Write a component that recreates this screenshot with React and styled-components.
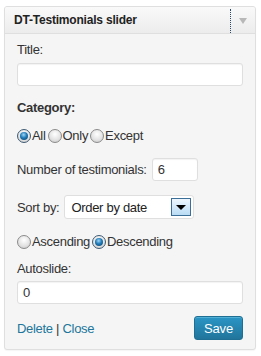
import React from "react";
import styled, { createGlobalStyle } from "styled-components";

const Global = createGlobalStyle`
  html, body { margin: 0; padding: 0; background: #fff; }
  body { font-family: "Liberation Sans", Arial, sans-serif; color: #333; }
`;

const Page = styled.div`
  padding: 6px 5px 7px 4px;
  width: 261px;
  box-sizing: border-box;
`;

const Panel = styled.div`
  border: 1px solid #dfdfdf;
  border-radius: 3px;
  background: #f5f5f5;
  box-shadow: 0 1px 1px rgba(0,0,0,0.04);
  overflow: hidden;
`;

const Header = styled.div`
  height: 26px;
  display: flex;
  align-items: center;
  background: linear-gradient(#f9f9f9, #ececec);
  border-bottom: 1px solid #dfdfdf;
`;

const HeaderTitle = styled.div`
  flex: 1;
  padding-left: 9px;
  font-size: 12px;
  font-weight: bold;
  letter-spacing: -0.2px;
  color: #222;
`;

const Toggle = styled.div`
  width: 24px;
  align-self: stretch;
  margin-top: 2px;
  border-left: 1px dotted #2b4a6b;
  display: flex;
  align-items: center;
  justify-content: center;
`;

const Arrow = styled.span`
  width: 0;
  height: 0;
  border-left: 4px solid transparent;
  border-right: 4px solid transparent;
  border-top: 6px solid #b8b8b8;
  margin-top: -1px;
`;

const Body = styled.div`
  padding: 8px 12px 9px 12px;
  font-size: 13px;
  letter-spacing: -0.3px;
`;

const Label = styled.div`
  line-height: 16px;
  font-weight: ${(p) => (p.$bold ? "bold" : "normal")};
  margin-top: ${(p) => p.$mt || 0}px;
`;

const TextInput = styled.div`
  box-sizing: border-box;
  height: 23px;
  margin-top: ${(p) => p.$mt || 0}px;
  width: ${(p) => p.$w || "100%"};
  background: #fff;
  border: 1px solid #dfdfdf;
  border-radius: 3px;
  box-shadow: inset 0 1px 1px rgba(0,0,0,0.05);
  padding: 0 5px;
  display: flex;
  align-items: center;
  font-size: 13px;
  color: #333;
`;

const Row = styled.div`
  display: flex;
  align-items: center;
  gap: ${(p) => p.$gap || 0}px;
  margin-top: ${(p) => p.$mt || 0}px;
`;

const RadioLabel = styled.label`
  display: inline-flex;
  align-items: center;
  line-height: 16px;
  margin-right: 2px;
`;

const RadioDot = styled.span`
  box-sizing: border-box;
  width: 14px;
  height: 14px;
  border-radius: 50%;
  margin-right: 1px;
  border: 1px solid ${(p) => (p.$on ? "#3d5a73" : "#8a8a8a")};
  background: radial-gradient(circle at 50% 35%, #ffffff 0%, #e4e4e4 55%, #c6c6c6 100%);
  position: relative;
  display: inline-block;
  &::after {
    content: "";
    display: ${(p) => (p.$on ? "block" : "none")};
    position: absolute;
    left: 2px;
    top: 2px;
    width: 8px;
    height: 8px;
    border-radius: 50%;
    background: radial-gradient(circle at 45% 35%, #9fd6f5 0%, #1f7ab8 45%, #0c3f66 100%);
  }
`;

const Select = styled.div`
  box-sizing: border-box;
  width: 130px;
  height: 24px;
  background: #fff;
  border: 1px solid #dfdfdf;
  border-radius: 3px;
  display: flex;
  align-items: center;
  padding: 0 2px 0 6px;
  font-size: 13px;
  color: #222;
`;

const SelectText = styled.span`
  flex: 1;
`;

const SelectButton = styled.span`
  box-sizing: border-box;
  width: 20px;
  height: 18px;
  border: 1px solid #3c6f98;
  background: linear-gradient(#eef6fd, #b9dcf5);
  display: flex;
  align-items: center;
  justify-content: center;
  &::after {
    content: "";
    border-left: 5px solid transparent;
    border-right: 5px solid transparent;
    border-top: 5px solid #000;
  }
`;

const Footer = styled.div`
  display: flex;
  align-items: center;
  justify-content: space-between;
  margin-top: 12px;
`;

const Links = styled.div`
  color: #333;
  font-size: 13px;
`;

const Link = styled.a`
  color: #21759b;
  text-decoration: none;
`;

const SaveButton = styled.button`
  box-sizing: border-box;
  width: 49px;
  height: 24px;
  border: 1px solid #1f6f94;
  border-radius: 3px;
  background: linear-gradient(#2a95c5, #21759b);
  color: #fff;
  font-family: "Liberation Sans", Arial, sans-serif;
  font-size: 13px;
  letter-spacing: -0.2px;
  padding: 0;
  box-shadow: inset 0 1px 0 rgba(120,200,230,0.5);
`;

function Radio({ on, children }) {
  return (
    <RadioLabel>
      <RadioDot $on={on} />
      {children}
    </RadioLabel>
  );
}

export default function App() {
  return (
    <>
      <Global />
      <Page>
        <Panel>
          <Header>
            <HeaderTitle>DT-Testimonials slider</HeaderTitle>
            <Toggle>
              <Arrow />
            </Toggle>
          </Header>
          <Body>
            <Label>Title:</Label>
            <TextInput $mt={5} />
            <Label $bold $mt={14}>Category:</Label>
            <Row $mt={12}>
              <Radio on>All</Radio>
              <Radio>Only</Radio>
              <Radio>Except</Radio>
            </Row>
            <Row $mt={14} $gap={5}>
              <span>Number of testimonials:</span>
              <TextInput $w="46px">6</TextInput>
            </Row>
            <Row $mt={14} $gap={5}>
              <span>Sort by:</span>
              <Select>
                <SelectText>Order by date</SelectText>
                <SelectButton />
              </Select>
            </Row>
            <Row $mt={15}>
              <Radio>Ascending</Radio>
              <Radio on>Descending</Radio>
            </Row>
            <Label $mt={11}>Autoslide:</Label>
            <TextInput $mt={4}>0</TextInput>
            <Footer>
              <Links>
                <Link href="#">Delete</Link> | <Link href="#">Close</Link>
              </Links>
              <SaveButton>Save</SaveButton>
            </Footer>
          </Body>
        </Panel>
      </Page>
    </>
  );
}
